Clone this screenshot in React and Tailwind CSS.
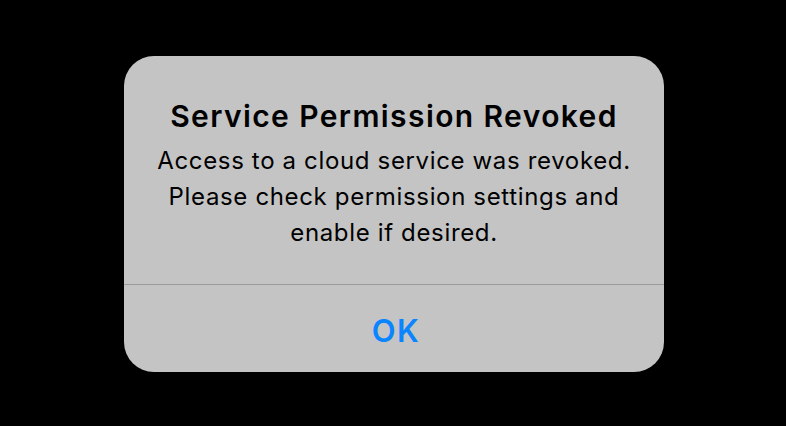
export default function App() {
  return (
    <div className="w-[786px] h-[426px] bg-black flex items-start justify-center pt-[56px] pl-[2px] font-['Inter',sans-serif]">
      <div className="w-[540px] h-[316px] bg-[#c4c4c4] rounded-[30px] flex flex-col overflow-hidden">
        <div className="flex flex-col items-center pt-[42px] h-[229px] border-b border-[#9a9a9a]">
          <h1 className="text-[30px] leading-[36px] font-semibold text-black tracking-[1.4px] whitespace-nowrap">
            Service Permission Revoked
          </h1>
          <p className="mt-[9px] text-[24px] leading-[36px] text-black text-center tracking-[0.65px] whitespace-nowrap">
            Access to a cloud service was revoked.
            <br />
            Please check permission settings and
            <br />
            enable if desired.
          </p>
        </div>
        <div className="flex-1 flex items-center justify-center pt-[4px] pl-[4px]">
          <span className="text-[31px] leading-[36px] font-semibold text-[#0a84ff] tracking-[1.5px]">OK</span>
        </div>
      </div>
    </div>
  );
}
